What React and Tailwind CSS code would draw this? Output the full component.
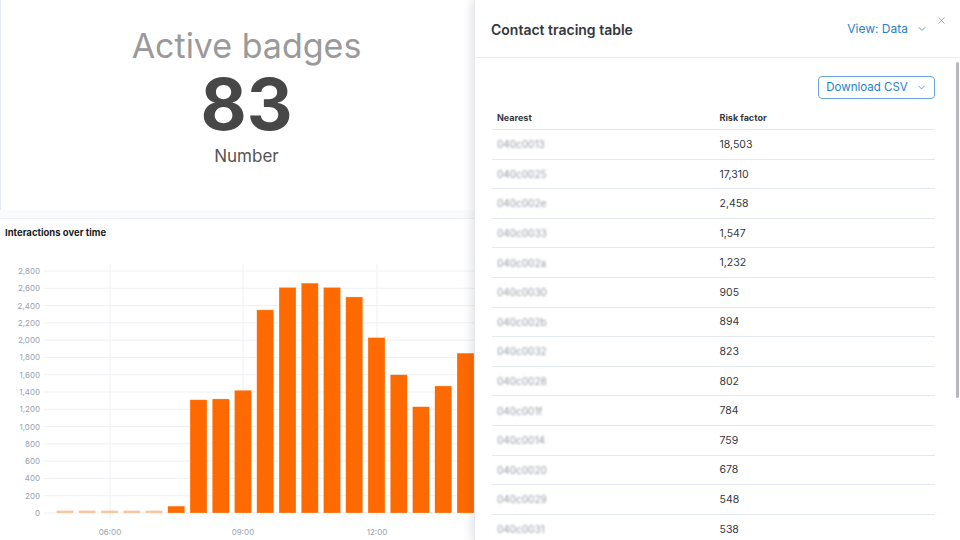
import { ChevronDown, X } from 'lucide-react';

const bars = [10, 10, 10, 10, 10, 80, 1310, 1320, 1420, 2350, 2610, 2660, 2610, 2500, 2030, 1600, 1230, 1470, 1850, 1700];

const yTicks = [0, 200, 400, 600, 800, 1000, 1200, 1400, 1600, 1800, 2000, 2200, 2400, 2600, 2800];

const rows = [
  ['040c0013', '18,503'],
  ['040c0025', '17,310'],
  ['040c002e', '2,458'],
  ['040c0033', '1,547'],
  ['040c002a', '1,232'],
  ['040c0030', '905'],
  ['040c002b', '894'],
  ['040c0032', '823'],
  ['040c0028', '802'],
  ['040c001f', '784'],
  ['040c0014', '759'],
  ['040c0020', '678'],
  ['040c0029', '548'],
  ['040c0031', '538'],
  ['040c0017', '512'],
  ['040c0021', '487'],
];

// chart coordinates (svg space, top of svg = page y 250)
const ZERO = 263;
const SCALE = 242 / 2800;

function InteractionsChart() {
  return (
    <svg width="492" height="290" className="block">
      {yTicks.map((t) => {
        const y = ZERO - t * SCALE;
        return (
          <g key={t}>
            <line x1="44" x2="492" y1={y} y2={y} stroke="#eef0f4" strokeWidth="1" />
            <text x="40" y={y + 3} textAnchor="end" fontSize="8" fill="#98a2b3" fontFamily="Inter, sans-serif">
              {t.toLocaleString('en-US')}
            </text>
          </g>
        );
      })}
      {[
        [110, '06:00'],
        [243, '09:00'],
        [377, '12:00'],
      ].map(([x, label]) => (
        <g key={label}>
          <line x1={x} x2={x} y1="14" y2="270" stroke="#eef0f4" strokeWidth="1" />
          <text x={x} y="285" textAnchor="middle" fontSize="8" fill="#98a2b3" fontFamily="Inter, sans-serif">
            {label}
          </text>
        </g>
      ))}
      {bars.map((v, i) => {
        const h = Math.max(v * SCALE, 2.5);
        const x = 56.5 + i * 22.25;
        return (
          <rect
            key={i}
            x={x}
            y={ZERO - h}
            width="17"
            height={h}
            fill="#ff6a00"
            fillOpacity={i < 5 ? 0.4 : 1}
            stroke="#ffffff"
            strokeOpacity="0.5"
            strokeWidth="0.5"
          />
        );
      })}
    </svg>
  );
}

function Flyout() {
  return (
    <div className="absolute top-0 right-0 h-full w-[486px] bg-white flex flex-col shadow-[-4px_0_8px_rgba(0,0,0,0.09)] border-l border-[#e3e6ec]">
      {/* Header */}
      <div className="relative h-[58px] shrink-0 flex items-center justify-between pl-[16px] pr-[32px] border-b border-[#e9edf3]">
        <h2 className="text-[14px] font-semibold text-[#343741] mt-[1px]">Contact tracing table</h2>
        <button className="flex items-center gap-[8px] text-[12px] text-[#2a7fc7] mt-[1px]">
          View: Data
          <ChevronDown size={12} strokeWidth={1.5} />
        </button>
        <X size={11} strokeWidth={1.3} className="absolute top-[15px] right-[13px] text-[#69707d]" />
      </div>

      {/* Body */}
      <div className="relative flex-1 overflow-hidden pl-[17px] pr-[25px] pt-[18px]">
        <div className="flex justify-end">
          <button className="h-[23px] w-[117px] flex items-center justify-center gap-[8px] border border-[#6aa5d8] rounded-[4px] text-[11.5px] text-[#2a7fc7]">
            Download CSV
            <ChevronDown size={11} strokeWidth={1.5} />
          </button>
        </div>

        <div className="mt-[7px]">
          <div className="grid grid-cols-2 h-[24px] items-center border-b border-[#e3e8f2] text-[9px] font-bold text-[#343741]">
            <div className="pl-[5px]">Nearest</div>
            <div className="pl-[6px]">Risk factor</div>
          </div>
          {rows.map(([id, risk]) => (
            <div key={id} className="grid grid-cols-2 h-[29.6px] items-center border-b border-[#e3e8f2] text-[10.5px]">
              <div className="pl-[5px] text-[10px] text-[#959ba3] blur-[1px] pt-[1px]">{id}</div>
              <div className="pl-[6px] text-[#343741] pt-[1px]">{risk}</div>
            </div>
          ))}
        </div>

        {/* scrollbar thumb */}
        <div className="absolute right-[1px] top-[4px] w-[3px] h-[336px] rounded-full bg-[#b5b7bb]" />
      </div>
    </div>
  );
}

export default function App() {
  return (
    <div className="relative w-[960px] h-[540px] overflow-hidden bg-[#fafbfd] font-['Inter',sans-serif]">
      {/* Dashboard */}
      <div className="flex flex-col gap-[8px] w-[492px]">
        {/* Metric */}
        <div className="h-[210px] bg-white border-l border-[#e3e8f0] flex flex-col items-center pt-[26px]">
          <div className="text-[34px] leading-[40px] text-[#9a9a9a]">Active badges</div>
          <div className="text-[71px] leading-[76px] font-bold text-[#474747]">83</div>
          <div className="text-[17px] leading-[22px] text-[#555555] mt-[3px]">Number</div>
        </div>

        {/* Chart */}
        <div className="h-[322px] bg-white border-t border-[#eef0f4] flex flex-col">
          <div className="pl-[5px] pt-[7px] h-[31px] text-[9.5px] font-bold text-[#1a1c21]">Interactions over time</div>
          <InteractionsChart />
        </div>
      </div>

      <Flyout />
    </div>
  );
}
